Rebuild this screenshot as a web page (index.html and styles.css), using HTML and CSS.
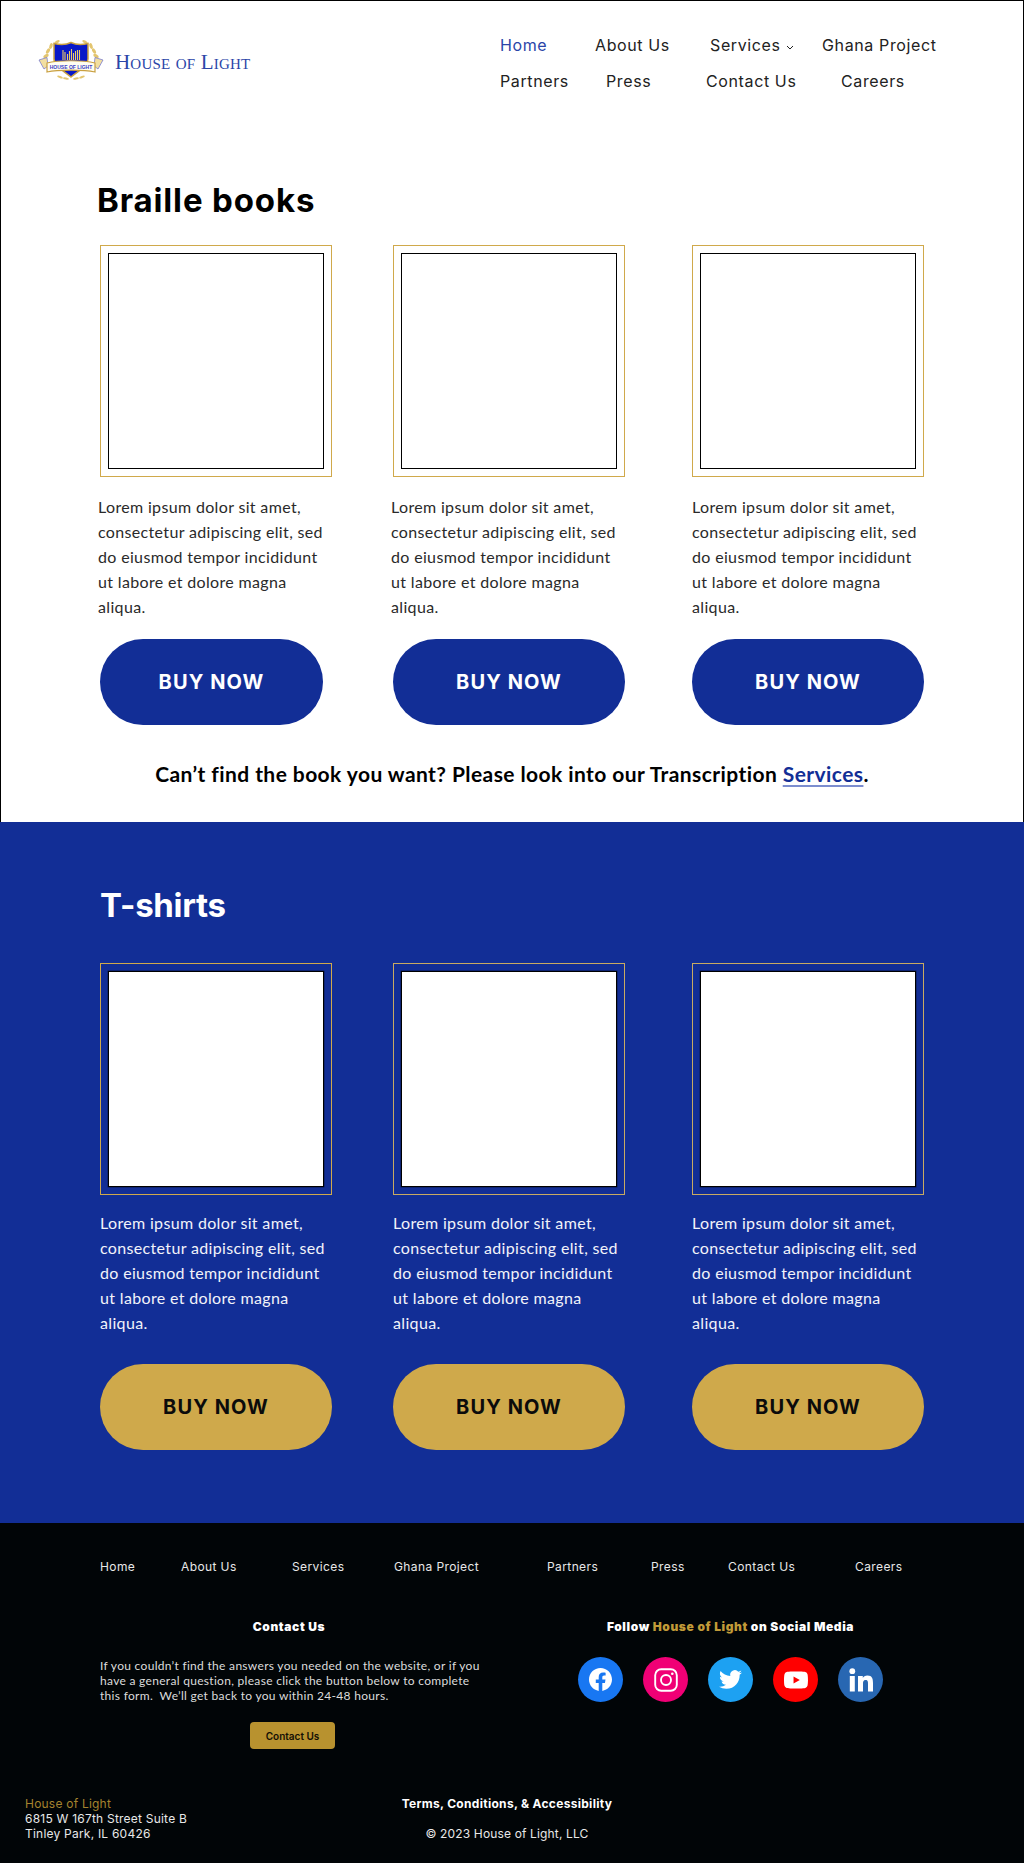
FILE: index.html
```html
<!DOCTYPE html>
<html lang="en">
<head>
<meta charset="utf-8">
<title>House of Light</title>
<link rel="stylesheet" href="styles.css">
</head>
<body>
<section class="white">
  <header class="header">
    <a class="brand">
      <svg class="crest" viewBox="0 0 66 42" width="66" height="42" aria-hidden="true">
        <g fill="#e3c56f">
          <ellipse cx="10" cy="12" rx="3" ry="1.6" transform="rotate(-60 10 12)"/>
          <ellipse cx="8" cy="17" rx="3" ry="1.6" transform="rotate(-30 8 17)"/>
          <ellipse cx="13" cy="7" rx="3" ry="1.6" transform="rotate(-70 13 7)"/>
          <ellipse cx="19" cy="3" rx="3" ry="1.4" transform="rotate(-30 19 3)"/>
          <ellipse cx="56" cy="12" rx="3" ry="1.6" transform="rotate(60 56 12)"/>
          <ellipse cx="58" cy="17" rx="3" ry="1.6" transform="rotate(30 58 17)"/>
          <ellipse cx="53" cy="7" rx="3" ry="1.6" transform="rotate(70 53 7)"/>
          <ellipse cx="47" cy="3" rx="3" ry="1.4" transform="rotate(30 47 3)"/>
          <ellipse cx="22" cy="38" rx="3" ry="1.1" transform="rotate(20 22 38)"/>
          <ellipse cx="28" cy="39.5" rx="3" ry="1.1" transform="rotate(10 28 39.5)"/>
          <ellipse cx="38" cy="39.5" rx="3" ry="1.1" transform="rotate(-10 38 39.5)"/>
          <ellipse cx="44" cy="38" rx="3" ry="1.1" transform="rotate(-20 44 38)"/>
        </g>
        <path d="M16 4.500C22 6 28 6 33 3.500C38 6 44 6 50 4.500L50 20C50 27 40 32 33 38C26 32 16 27 16 20Z" fill="#0818c8" stroke="#c9a040" stroke-width="1.500"/>
        <g stroke="#eecb68" stroke-width="1.100" fill="none">
          <path d="M25 11V21M27 13V21M29.500 15V21M31.500 12V21M33.500 10V21M35.500 14V21M37.500 12V21M39.500 11V21M41.500 11V21"/>
        </g>
        <path d="M1 21L9 18.500L10 27L6 30Z" fill="#f2dfa0" stroke="#6a6fd0" stroke-width=".7"/>
        <path d="M65 21L57 18.500L56 27L60 30Z" fill="#f2dfa0" stroke="#6a6fd0" stroke-width=".7"/>
        <path d="M9 24C20 21 46 21 57 24V33C46 30.500 20 30.500 9 33Z" fill="#fffdf2" stroke="#c9a040" stroke-width="1.200"/>
        <text class="crest-text" x="33" y="30" text-anchor="middle">HOUSE OF LIGHT</text>
      </svg>
      <span class="brand-name">House of Light</span>
    </a>
    <nav class="nav">
      <a class="nav-link active">Home</a>
      <a class="nav-link">About Us</a>
      <a class="nav-link nudge-4">Services <svg class="caret" viewBox="0 0 8 5" width="8" height="5" aria-hidden="true"><path d="M1 1l3 3 3-3" fill="none" stroke="#222" stroke-width="1"/></svg></a>
      <a class="nav-link">Ghana Project</a>
      <a class="nav-link">Partners</a>
      <a class="nav-link nudge-11">Press</a>
      <a class="nav-link">Contact Us</a>
      <a class="nav-link nudge-19">Careers</a>
    </nav>
  </header>

  <h2 class="heading heading-books">Braille books</h2>
  <div class="cards">
    <article class="card">
      <div class="frame"><div class="photo"></div></div>
      <p class="copy copy-shift">Lorem ipsum dolor sit amet, consectetur adipiscing elit, sed do eiusmod tempor incididunt ut labore et dolore magna aliqua.</p>
      <a class="buy buy-blue buy-narrow">BUY NOW</a>
    </article>
    <article class="card">
      <div class="frame"><div class="photo"></div></div>
      <p class="copy copy-shift">Lorem ipsum dolor sit amet, consectetur adipiscing elit, sed do eiusmod tempor incididunt ut labore et dolore magna aliqua.</p>
      <a class="buy buy-blue">BUY NOW</a>
    </article>
    <article class="card">
      <div class="frame"><div class="photo"></div></div>
      <p class="copy">Lorem ipsum dolor sit amet, consectetur adipiscing elit, sed do eiusmod tempor incididunt ut labore et dolore magna aliqua.</p>
      <a class="buy buy-blue">BUY NOW</a>
    </article>
  </div>
  <p class="note">Can’t find the book you want? Please look into our Transcription <a class="note-link">Services</a>.</p>
</section>

<section class="blue">
  <h2 class="heading heading-shirts">T-shirts</h2>
  <div class="cards cards-shirts">
    <article class="card">
      <div class="frame"><div class="photo"></div></div>
      <p class="copy copy-light">Lorem ipsum dolor sit amet, consectetur adipiscing elit, sed do eiusmod tempor incididunt ut labore et dolore magna aliqua.</p>
      <a class="buy buy-gold">BUY NOW</a>
    </article>
    <article class="card">
      <div class="frame frame-pale"><div class="photo"></div></div>
      <p class="copy copy-light">Lorem ipsum dolor sit amet, consectetur adipiscing elit, sed do eiusmod tempor incididunt ut labore et dolore magna aliqua.</p>
      <a class="buy buy-gold">BUY NOW</a>
    </article>
    <article class="card">
      <div class="frame frame-pale"><div class="photo"></div></div>
      <p class="copy copy-light">Lorem ipsum dolor sit amet, consectetur adipiscing elit, sed do eiusmod tempor incididunt ut labore et dolore magna aliqua.</p>
      <a class="buy buy-gold">BUY NOW</a>
    </article>
  </div>
</section>

<footer class="footer">
  <nav class="foot-nav">
    <a>Home</a><a>About Us</a><a>Services</a><a>Ghana Project</a><a>Partners</a><a>Press</a><a>Contact Us</a><a>Careers</a>
  </nav>
  <div class="foot-main">
    <div class="foot-contact">
      <h3 class="foot-title foot-title-contact">Contact Us</h3>
      <p class="foot-copy">If you couldn’t find the answers you needed on the website, or if you have a general question, please click the button below to complete this form.&nbsp; We’ll get back to you within 24-48 hours.</p>
      <a class="foot-button">Contact Us</a>
    </div>
    <div class="foot-social">
      <h3 class="foot-title">Follow <span class="gold-text">House of Light</span> on Social Media</h3>
      <div class="socials">
        <a class="social fb"><svg viewBox="0 0 24 24" width="23" height="23" aria-hidden="true"><path fill="#fff" d="M24 12.073c0-6.627-5.373-12-12-12s-12 5.373-12 12c0 5.990 4.388 10.954 10.125 11.854v-8.385H7.078v-3.470h3.047V9.430c0-3.007 1.792-4.669 4.533-4.669 1.312 0 2.686.235 2.686.235v2.953H15.830c-1.491 0-1.956.925-1.956 1.874v2.250h3.328l-.532 3.470h-2.796v8.385C19.612 23.027 24 18.062 24 12.073z"/></svg></a>
        <a class="social ig"><svg viewBox="0 0 24 24" width="24" height="24" aria-hidden="true"><rect x="1.200" y="1.200" width="21.600" height="21.600" rx="6" fill="none" stroke="#fff" stroke-width="1.900"/><circle cx="12" cy="12" r="5" fill="none" stroke="#fff" stroke-width="1.900"/><circle cx="18.300" cy="5.700" r="1.300" fill="#fff"/></svg></a>
        <a class="social tw"><svg viewBox="0 0 24 24" width="23" height="23" aria-hidden="true"><path fill="#fff" d="M23.953 4.570a10 10 0 01-2.825.775 4.958 4.958 0 002.163-2.723c-.951.555-2.005.959-3.127 1.184a4.920 4.920 0 00-8.384 4.482C7.690 8.095 4.067 6.130 1.640 3.162a4.822 4.822 0 00-.666 2.475c0 1.710.870 3.213 2.188 4.096a4.904 4.904 0 01-2.228-.616v.060a4.923 4.923 0 003.946 4.827 4.996 4.996 0 01-2.212.085 4.936 4.936 0 004.604 3.417 9.867 9.867 0 01-6.102 2.105c-.390 0-.779-.023-1.170-.067a13.995 13.995 0 007.557 2.209c9.053 0 13.998-7.496 13.998-13.985 0-.210 0-.420-.015-.630A9.935 9.935 0 0024 4.590z"/></svg></a>
        <a class="social yt"><svg viewBox="0 0 24 24" width="24" height="24" aria-hidden="true"><path fill="#fff" fill-rule="evenodd" d="M23.498 6.186a3.016 3.016 0 0 0-2.122-2.136C19.505 3.545 12 3.545 12 3.545s-7.505 0-9.377.505A3.017 3.017 0 0 0 .502 6.186C0 8.070 0 12 0 12s0 3.930.502 5.814a3.016 3.016 0 0 0 2.122 2.136c1.871.505 9.376.505 9.376.505s7.505 0 9.377-.505a3.015 3.015 0 0 0 2.122-2.136C24 15.930 24 12 24 12s0-3.930-.502-5.814zM9.545 15.568V8.432L15.818 12l-6.273 3.568z"/></svg></a>
        <a class="social li"><svg viewBox="0 0 24 24" width="24" height="24" aria-hidden="true"><g fill="#fff"><circle cx="3.300" cy="3.200" r="2.900"/><rect x=".8" y="8" width="5" height="15.500"/><path d="M9 8h4.800v2.100c.7-1.300 2.300-2.500 4.600-2.500 4.900 0 5.600 3.200 5.600 7.400v8.500h-5v-7.600c0-1.700 0-3.900-2.400-3.900s-2.600 1.800-2.600 3.800v7.700H9z"/></g></svg></a>
      </div>
    </div>
  </div>
  <div class="foot-bottom">
    <address class="address"><span class="gold-dim">House of Light</span><br>6815 W 167th Street Suite B<br>Tinley Park, IL 60426</address>
    <div class="legal">
      <a class="legal-link">Terms, Conditions, &amp; Accessibility</a>
      <p class="legal-copy">© 2023 House of Light, LLC</p>
    </div>
  </div>
</footer>
</body>
</html>
```

FILE: styles.css
```css
* { box-sizing: border-box; }
html, body { margin: 0; padding: 0; }
body { width: 1024px; background: #fff; color: #000; font-family: "Inter", "Liberation Sans", sans-serif; }
p, h2, h3 { margin: 0; }
address { font-style: normal; }

.white { height: 822px; border: 1px solid #000; border-bottom: 0; }
.header { display: flex; height: 98px; padding-top: 26px; }
.brand { display: flex; align-items: center; height: 68px; margin-left: 37px; width: 462px; }
.crest { flex: none; margin-top: -2px; }
.crest-text { font-family: "Liberation Sans", sans-serif; font-size: 5px; font-weight: 700; fill: #3a3fc8; }
.brand-name { margin: 2px 0 0 11px; font-family: "Liberation Serif", serif; font-size: 21px; font-variant: small-caps; letter-spacing: .2px; color: #2b45a8; white-space: nowrap; }

.nav { display: grid; grid-template-columns: 95px 111px 116px 120px; grid-auto-rows: 36px; align-items: center; }
.nav-link { font-size: 16px; font-weight: 400; color: #222; white-space: nowrap; letter-spacing: .62px; }
.nav-link.active { color: #2b45a8; }
.nudge-4 { padding-left: 4px; }
.nudge-11 { padding-left: 11px; }
.nudge-19 { padding-left: 19px; }
.caret { margin-left: 0; vertical-align: 1px; }

.heading { font-size: 33px; font-weight: 700; line-height: 40px; letter-spacing: .85px; }
.heading-books { margin: 81px 0 0 96px; }
.heading-shirts { color: #fff; margin-left: 100px; letter-spacing: -.3px; }

.cards { display: grid; grid-template-columns: 293px 299px 232px; margin: 25px 0 0 99px; }
.cards-shirts { margin: 38px 0 0 100px; }
.cards-shirts .photo { box-shadow: 0 0 0 .4px rgba(0, 0, 0, .6); }
.card { width: 232px; }
.frame { width: 232px; height: 232px; padding: 7px; border: 1px solid #d0a94b; }
.frame-pale { border-color: #c8aa62; }
.photo { width: 100%; height: 100%; background: #fff; border: 1px solid #000; }

.copy { width: 232px; margin: 17px 0 0; font-family: "Lato", sans-serif; font-size: 16px; font-weight: 400; line-height: 25px; letter-spacing: .34px; color: #2a2a2a; }
.copy-shift { margin-left: -2px; }
.copy-light { margin-top: 15px; color: #f2f3fa; }

.buy { display: flex; align-items: center; justify-content: center; width: 232px; height: 86px; border-radius: 43px; font-size: 20px; font-weight: 700; letter-spacing: 1.1px; }
.buy-blue { margin-top: 20px; background: #122e96; color: #fff; }
.buy-narrow { width: 223px; }
.buy-gold { margin-top: 29px; background: #cfa94b; color: #0b0b0b; }

.note { margin-top: 34px; text-align: center; font-family: "Lato", sans-serif; font-size: 21px; font-weight: 700; line-height: 30px; letter-spacing: .42px; }
.note-link { color: #122e96; text-decoration: underline; text-decoration-color: #7c8dcf; text-decoration-thickness: 2px; text-underline-offset: 3px; }

.blue { height: 701px; padding-top: 63px; background: #122e96; }

.footer { height: 340px; padding-top: 36px; background: #010507; color: #e8e8e8; }
.foot-nav { display: grid; grid-template-columns: 81px 111px 102px 153px 104px 77px 127px auto; margin-left: 100px; font-size: 12px; line-height: 16px; letter-spacing: .4px; }
.foot-main { display: flex; margin: 44px 0 0 100px; }
.foot-contact { width: 378px; }
.foot-title { font-size: 12px; font-weight: 900; line-height: 16px; letter-spacing: .6px; color: #fff; text-align: center; white-space: nowrap; }
.foot-title-contact { letter-spacing: .6px; }
.foot-copy { width: 385px; margin-top: 23px; font-family: "Lato", sans-serif; font-size: 12px; font-weight: 400; line-height: 15px; letter-spacing: .3px; color: #dcdcdc; }
.foot-button { display: flex; align-items: center; justify-content: center; width: 85px; height: 27px; margin: 19px 0 0 150px; border-radius: 4px; background: #b8922f; color: #141005; font-size: 10px; font-weight: 600; }
.foot-social { width: 505px; }
.gold-text { color: #c19b38; }
.socials { display: flex; justify-content: center; gap: 20px; margin-top: 22px; }
.social { display: flex; align-items: center; justify-content: center; width: 45px; height: 45px; border-radius: 50%; }
.fb { background: #1877f2; }
.ig { background: #f00075; }
.tw { background: #1da1f2; }
.yt { background: #f00; }
.li { background: #2867b2; }

.foot-bottom { display: flex; margin-top: 47px; }
.address { width: 307px; padding-left: 25px; font-size: 12px; line-height: 15px; letter-spacing: .22px; }
.gold-dim { color: #a5832e; }
.legal { width: 400px; text-align: center; }
.legal-link { display: block; font-size: 12px; font-weight: 700; line-height: 15px; letter-spacing: .3px; color: #fff; }
.legal-copy { margin-top: 15px; font-size: 12px; line-height: 15px; letter-spacing: .15px; }
```
